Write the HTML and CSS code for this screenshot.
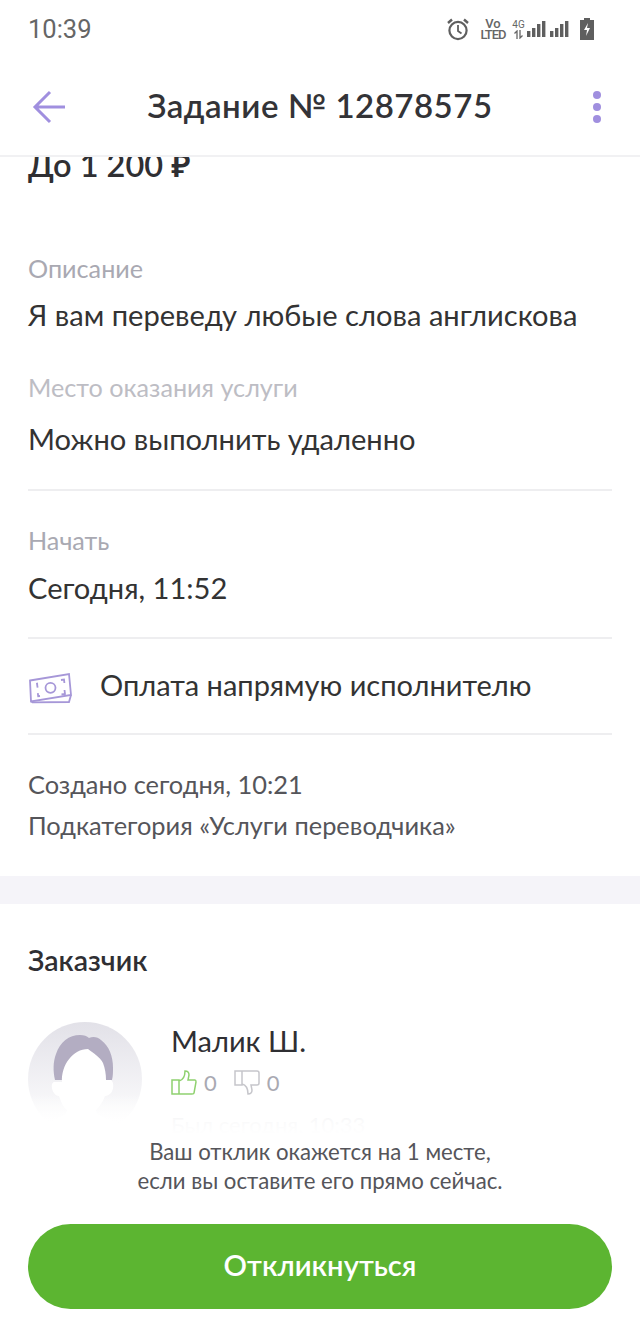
FILE: index.html
```html
<!DOCTYPE html>
<html lang="ru">
<head>
  <meta charset="UTF-8">
  <title>Задание № 12878575</title>
  <link rel="stylesheet" href="styles.css">
</head>
<body>
  <div class="screen">
    <div class="status-bar">
      <span class="status-time">10:39</span>
      <div class="status-icons">
        <svg class="icon-alarm" width="24" height="24" viewBox="0 0 24 24" fill="none" stroke="#5f5f5f" stroke-width="2.2">
          <circle cx="12" cy="13.5" r="8.6"/>
          <path d="M12 8v6l3.5 2.5" stroke-width="1.8"/>
          <path d="M2 6l4-3.5M22 6l-4-3.5" stroke-width="2.4"/>
        </svg>
        <div class="volte"><span>Vo</span><span class="volte-bottom">LTED</span></div>
        <div class="net">
          <span>4G</span>
          <svg width="11" height="9" viewBox="0 0 11 9" fill="none" stroke="#666" stroke-width="1.300">
            <path d="M4 9V1L1.500 3.500M7 0v8l2.500-2.500"/>
          </svg>
        </div>
        <svg class="signal" width="42" height="20" viewBox="0 0 42 20" fill="#5f5f5f">
          <rect x="0" y="12" width="3.4" height="6"/><rect x="5" y="9" width="3.4" height="9"/><rect x="10" y="5" width="3.4" height="13"/><rect x="15" y="2" width="3.4" height="16"/>
          <rect x="23" y="12" width="3.4" height="6"/><rect x="28" y="9" width="3.4" height="9"/><rect x="33" y="5" width="3.4" height="13"/><rect x="38" y="2" width="3.4" height="16"/>
        </svg>
        <svg class="battery" width="16" height="24" viewBox="0 0 16 24">
          <path d="M5 1h6v2h4v20H1V3h4z" fill="#5f5f5f"/>
          <path d="M9 6l-4 7h3l-1 6 4-8H8z" fill="#fff"/>
        </svg>
      </div>
    </div>

    <header class="app-header">
      <svg class="back" width="36" height="36" viewBox="0 0 36 36" fill="none" stroke="#a08fdf" stroke-width="3">
        <path d="M33 18H3M18 3L3 18l15 15"/>
      </svg>
      <h1>Задание № 12878575</h1>
      <div class="dots"><i></i><i></i><i></i></div>
    </header>

    <main class="content">
      <div class="price">До 1 200 ₽</div>

      <section class="info">
        <div class="label label-first">Описание</div>
        <div class="value">Я вам переведу любые слова англискова</div>
        <div class="label label-place">Место оказания услуги</div>
        <div class="value value-place">Можно выполнить удаленно</div>
      </section>

      <section class="info info-start">
        <div class="label">Начать</div>
        <div class="value">Сегодня, 11:52</div>
      </section>

      <section class="payment">
        <svg class="money" width="44" height="32" viewBox="0 0 44 32" fill="none" stroke="#a697d8" stroke-width="1.800">
          <path d="M2 8.500L41 2l2 21L3 29.500z" fill="#fff"/>
          <path d="M3.500 29.500l1 .8L41 30l2-7"/>
          <circle cx="22.500" cy="15.800" r="5"/>
          <path d="M10 11.500l-1 .2.6 4M12 24l-1.800.2-.4-3M33 8l3-.5.4 3.500M36.500 18l.5 4-3.500.5"/>
        </svg>
        <span>Оплата напрямую исполнителю</span>
      </section>

      <section class="meta">
        <div>Создано сегодня, 10:21</div>
        <div>Подкатегория «Услуги переводчика»</div>
      </section>

      <div class="gap"></div>

      <section class="customer">
        <h2>Заказчик</h2>
        <div class="person">
          <div class="avatar">
            <svg width="114" height="114" viewBox="0 0 114 114">
              <path d="M27 58c-2-9-2-18 1-26 4-12 13-19 24-19 4 0 7 1 9 3 4-2 9-1 12 2 8 6 12 16 12 28 0 4 0 8-1 12H34z" fill="#b3adc2"/>
              <path d="M34 60c-1-17 11-33 26-33 5 4 12 8 15 14 2 5 3 11 3 17l5 0c3 2 3 9 0 13-2 2-4 3-6 3-2 6-6 11-9 14 0 4 6 8 24 14l5 12H12l4-12c17-6 23-10 23-14-4-3-6-8-8-14-2 0-4-1-5-3-3-4-3-10 0-11z" fill="#fff"/>
            </svg>
          </div>
          <div class="person-info">
            <div class="person-name">Малик Ш.</div>
            <div class="votes">
              <svg width="26" height="25" viewBox="0 0 26 25" fill="none" stroke="#8fd16f" stroke-width="1.500">
                <path d="M1 10h7v14H1zM8 11c4-1 6-5 6-10 3 0 4 2 4 4l-1 5h7c1 0 1 1 1 2l-2 11c0 1-1 1-2 1H8"/>
              </svg>
              <span class="vote-count">0</span>
              <svg class="vote-down" width="26" height="25" viewBox="0 0 26 25" fill="none" stroke="#c6c6cb" stroke-width="1.500">
                <path d="M1 1h7v14H1zM8 14c4 1 6 5 6 10 3 0 4-2 4-4l-1-5h6c1 0 2-1 2-2V3c0-1-1-2-2-2H8"/>
              </svg>
              <span class="vote-count">0</span>
            </div>
            <div class="last-seen">Был сегодня, 10:33</div>
          </div>
        </div>
      </section>
    </main>

    <div class="respond">
      <p>Ваш отклик окажется на 1 месте,<br>если вы оставите его прямо сейчас.</p>
      <button type="button">Откликнуться</button>
    </div>
  </div>
</body>
</html>
```

FILE: styles.css
```css
* {
  box-sizing: border-box;
}
html, body {
  margin: 0;
  padding: 0;
}
body {
  font-family: "Lato", "Noto Sans", sans-serif;
  background: #fff;
  color: #2f2f33;
}
.screen {
  position: relative;
  width: 640px;
  height: 1326px;
  overflow: hidden;
  display: flex;
  flex-direction: column;
}
.status-bar {
  height: 58px;
  padding: 0 28px;
  display: flex;
  justify-content: space-between;
  align-items: center;
  flex-shrink: 0;
}
.status-time {
  font-family: "Roboto", sans-serif;
  font-size: 25.500px;
  color: #666;
}
.status-icons {
  display: flex;
  align-items: center;
  margin-right: 17px;
}
.icon-alarm {
  margin-right: 9px;
}
.volte, .net {
  display: flex;
  flex-direction: column;
  font-family: "Roboto", sans-serif;
  color: #666;
  align-items: center;
}
.volte {
  width: 28px;
  margin-right: 5px;
  font-size: 13px;
  font-weight: 500;
  line-height: 11px;
}
.volte-bottom {
  letter-spacing: -1px;
}
.net {
  width: 13px;
  margin-right: 2px;
  font-size: 10px;
  line-height: 10px;
}
.signal {
  margin-right: 10px;
}
.app-header {
  height: 99px;
  flex-shrink: 0;
  padding: 0 32px;
  display: grid;
  grid-template-columns: 1fr auto 1fr;
  align-items: center;
  border-bottom: 2px solid #f1f1f3;
  background: #fff;
  position: relative;
  z-index: 2;
}
.app-header h1 {
  margin: -3px 0 0;
  font-size: 33px;
  font-weight: 600;
  letter-spacing: .5px;
  color: #333337;
}
.dots {
  justify-self: end;
  display: flex;
  flex-direction: column;
  gap: 4px;
  margin-right: 7px;
}
.dots i {
  width: 8px;
  height: 8px;
  border-radius: 50%;
  background: #a08fdf;
}
.content {
  flex: 1;
  min-height: 0;
  overflow: hidden;
}
.price {
  margin: -12px 28px 0;
  height: 40px;
  line-height: 40px;
  font-size: 32.500px;
  font-weight: 600;
}
.info {
  margin: 0 28px;
  border-bottom: 2px solid #eeeef0;
}
.label {
  font-size: 25.200px;
  line-height: 30px;
  color: #a9a9b2;
}
.label-first {
  margin-top: 68px;
}
.label-place {
  margin-top: 39px;
  color: #bdbdc4;
}
.value {
  font-size: 29.100px;
  line-height: 36px;
  margin-top: 14px;
  color: #333;
}
.value-place {
  margin-top: 19px;
  margin-bottom: 32px;
}
.info-start {
  padding: 34px 0 31px;
}
.info-start .value {
  margin-top: 15px;
}
.payment {
  margin: 0 28px;
  height: 96px;
  padding-bottom: 3px;
  display: flex;
  align-items: center;
  gap: 28px;
  font-size: 29px;
  border-bottom: 2px solid #eeeef0;
  color: #333;
}
.money {
  margin-top: 6px;
}
.meta {
  margin: 0 28px;
  padding-top: 29px;
  font-size: 25.400px;
  line-height: 41px;
  color: #55555a;
}
.gap {
  height: 28px;
  margin-top: 30px;
  background: #f5f4f9;
}
.customer {
  padding: 0 28px;
}
.customer h2 {
  margin: 38px 0 0;
  font-size: 28.500px;
  line-height: 36px;
  font-weight: 600;
}
.person {
  display: flex;
  gap: 29px;
  margin-top: 44px;
}
.avatar {
  width: 114px;
  height: 114px;
  border-radius: 50%;
  overflow: hidden;
  background: linear-gradient(#e2e1e8, #fff 95%);
  flex-shrink: 0;
}
.person-name {
  font-size: 29px;
  line-height: 38px;
}
.votes {
  display: flex;
  align-items: center;
  gap: 7px;
  margin-top: 9px;
  font-size: 22px;
  color: #a9a9b2;
}
.vote-down {
  margin-left: 10px;
}
.last-seen {
  margin-top: 14px;
  font-size: 22px;
  line-height: 30px;
  color: #b0b0b8;
}
.respond {
  position: absolute;
  left: 0;
  right: 0;
  bottom: 0;
  padding: 43px 28px 17px;
  text-align: center;
  background: linear-gradient(rgba(255,255,255,0), rgba(255,255,255,.92) 25px, #fff 40px);
}
.respond p {
  margin: 0 0 29px;
  font-size: 22.200px;
  line-height: 29px;
  color: #55555a;
}
.respond button {
  display: block;
  width: 100%;
  height: 85px;
  padding: 0 0 5px;
  border: none;
  border-radius: 43px;
  background: #5cb531;
  color: #fff;
  font-family: inherit;
  font-size: 29.200px;
  font-weight: 600;
}
```
